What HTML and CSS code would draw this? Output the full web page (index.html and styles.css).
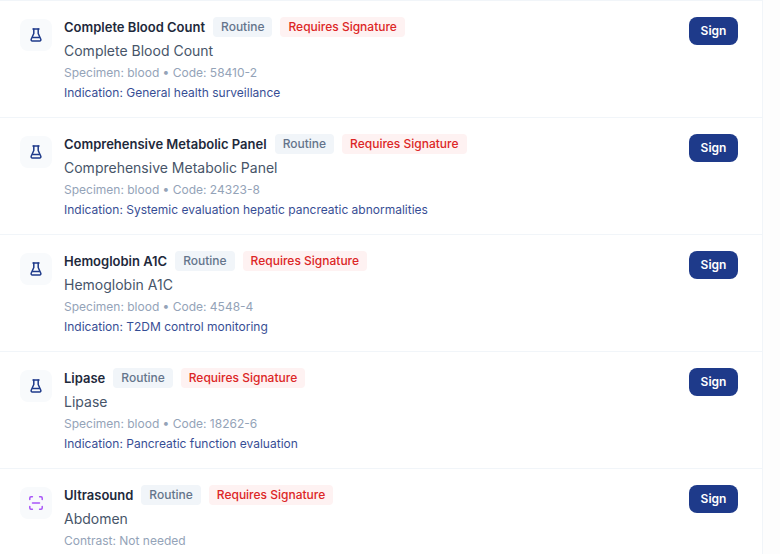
FILE: index.html
```html
<!DOCTYPE html>
<html lang="en">
<head>
<meta charset="utf-8">
<title>Orders</title>
<link rel="stylesheet" href="styles.css">
</head>
<body>
<main class="panel">
  <article class="row">
    <div class="icon"><svg viewBox="0 0 16 16" class="glyph lab"><path d="M5 2h6"/><path d="M5.800 2v4.500L3.200 12.300a1.200 1.200 0 0 0 1.100 1.700h7.400a1.200 1.200 0 0 0 1.100-1.700L10.200 6.500V2"/><path d="M4.800 10.500h6.400"/></svg></div>
    <div class="body">
      <div class="head"><span class="name">Complete Blood Count</span><span class="tag routine">Routine</span><span class="tag req">Requires Signature</span></div>
      <div class="desc">Complete Blood Count</div>
      <div class="meta">Specimen: blood • Code: 58410-2</div>
      <div class="ind">Indication: General health surveillance</div>
    </div>
    <button class="sign">Sign</button>
  </article>
  <article class="row">
    <div class="icon"><svg viewBox="0 0 16 16" class="glyph lab"><path d="M5 2h6"/><path d="M5.800 2v4.500L3.200 12.300a1.200 1.200 0 0 0 1.100 1.700h7.400a1.200 1.200 0 0 0 1.100-1.700L10.200 6.500V2"/><path d="M4.800 10.500h6.400"/></svg></div>
    <div class="body">
      <div class="head"><span class="name">Comprehensive Metabolic Panel</span><span class="tag routine">Routine</span><span class="tag req">Requires Signature</span></div>
      <div class="desc">Comprehensive Metabolic Panel</div>
      <div class="meta">Specimen: blood • Code: 24323-8</div>
      <div class="ind">Indication: Systemic evaluation hepatic pancreatic abnormalities</div>
    </div>
    <button class="sign">Sign</button>
  </article>
  <article class="row">
    <div class="icon"><svg viewBox="0 0 16 16" class="glyph lab"><path d="M5 2h6"/><path d="M5.800 2v4.500L3.200 12.300a1.200 1.200 0 0 0 1.100 1.700h7.400a1.200 1.200 0 0 0 1.100-1.700L10.200 6.500V2"/><path d="M4.800 10.500h6.400"/></svg></div>
    <div class="body">
      <div class="head"><span class="name">Hemoglobin A1C</span><span class="tag routine">Routine</span><span class="tag req">Requires Signature</span></div>
      <div class="desc">Hemoglobin A1C</div>
      <div class="meta">Specimen: blood • Code: 4548-4</div>
      <div class="ind">Indication: T2DM control monitoring</div>
    </div>
    <button class="sign">Sign</button>
  </article>
  <article class="row">
    <div class="icon"><svg viewBox="0 0 16 16" class="glyph lab"><path d="M5 2h6"/><path d="M5.800 2v4.500L3.200 12.300a1.200 1.200 0 0 0 1.100 1.700h7.400a1.200 1.200 0 0 0 1.100-1.700L10.200 6.500V2"/><path d="M4.800 10.500h6.400"/></svg></div>
    <div class="body">
      <div class="head"><span class="name">Lipase</span><span class="tag routine">Routine</span><span class="tag req">Requires Signature</span></div>
      <div class="desc">Lipase</div>
      <div class="meta">Specimen: blood • Code: 18262-6</div>
      <div class="ind">Indication: Pancreatic function evaluation</div>
    </div>
    <button class="sign">Sign</button>
  </article>
  <article class="row">
    <div class="icon"><svg viewBox="0 0 16 16" class="glyph scan"><path d="M1.800 4.400V3a1.200 1.200 0 0 1 1.200-1.200h1.400"/><path d="M11.600 1.800H13A1.200 1.200 0 0 1 14.200 3v1.400"/><path d="M14.200 11.600V13a1.200 1.200 0 0 1-1.200 1.200h-1.400"/><path d="M4.400 14.200H3A1.200 1.200 0 0 1 1.800 13v-1.400"/><path d="M4.500 8h7"/></svg></div>
    <div class="body">
      <div class="head"><span class="name">Ultrasound</span><span class="tag routine">Routine</span><span class="tag req">Requires Signature</span></div>
      <div class="desc">Abdomen</div>
      <div class="meta">Contrast: Not needed</div>
    </div>
    <button class="sign">Sign</button>
  </article>
</main>
</body>
</html>
```
FILE: styles.css
```css
* { box-sizing: border-box; }
html, body { margin: 0; padding: 0; height: 100%; overflow: hidden; background: #fdfdfd; }
body { font-family: Inter, "Liberation Sans", sans-serif; }
.panel { width: 763px; height: 554px; background: #fff; border-right: 1px solid #f1f5f9; overflow: hidden; }
.row { display: flex; align-items: flex-start; gap: 12px; height: 117px; padding: 16px 24px 16px 20px; border-top: 1px solid #f1f5f9; }
.icon { width: 32px; height: 32px; flex: none; margin-top: 2px; border-radius: 8px; background: #f8fafc; display: flex; align-items: center; justify-content: center; }
.glyph { width: 16px; height: 16px; fill: none; stroke-width: 1.500; stroke-linecap: round; stroke-linejoin: round; }
.lab { stroke: #1e3a8a; }
.scan { stroke: #a855f7; }
.body { flex: 1; min-width: 0; }
.head { display: flex; align-items: center; gap: 8px; height: 20px; }
.name { font-size: 13px; font-weight: 600; color: #1e293b; }
.tag { font-size: 12px; font-weight: 500; line-height: 16px; padding: 2px 8px; border-radius: 4px; }
.routine { background: #f1f5f9; color: #64748b; }
.req { background: #fef2f2; color: #dc2626; }
.desc { margin-top: 4px; font-size: 14px; line-height: 20px; color: #475569; }
.meta { margin-top: 4px; font-size: 12px; line-height: 16px; color: #94a3b8; }
.ind { margin-top: 4px; font-size: 12px; line-height: 16px; color: #1e3a8a; opacity: 0.9; }
.sign { flex: none; width: 49px; height: 28px; padding: 0 0 2px; border: 0; border-radius: 8px; background: #1e3a8a; color: #fff; font: 600 12px Inter, "Liberation Sans", sans-serif; }
```
